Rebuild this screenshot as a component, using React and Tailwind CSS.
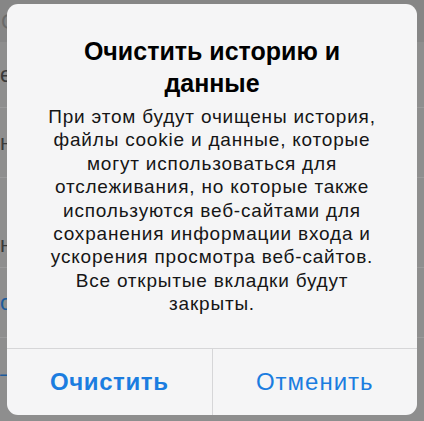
import React from 'react';

function BackgroundPage() {
  // dimmed settings screen behind the alert
  return (
    <div className="flex flex-col h-full w-full bg-[#8e8e8e]">
      <div className="h-[42px] bg-[#868686] flex items-center px-[1px] text-[22px] text-[#6a6a6a]">С</div>
      <div className="h-[66px] border-b border-[#9a9a9a] flex items-center text-[22px] text-[#3a3a3a]">е</div>
      <div className="h-[70px] border-b border-[#9a9a9a] flex items-center text-[22px] text-[#3a3a3a]">н</div>
      <div className="h-[90px] border-b border-[#9a9a9a] flex items-end pb-[6px] text-[22px] text-[#3a3a3a]">н</div>
      <div className="h-[70px] border-b border-[#9a9a9a] flex items-center text-[22px] text-[#1d5c9c]">о</div>
      <div className="h-[70px] flex items-center text-[22px] text-[#1d5c9c]">–</div>
    </div>
  );
}

function Alert() {
  return (
    <div className="absolute left-[7px] top-[4px] w-[410px] h-[411px] rounded-[11px] bg-[#f5f5f6] flex flex-col overflow-hidden">
      <div className="flex-1 flex flex-col items-center pt-[31px] text-center">
        <h2 className="text-[25px] leading-[32px] font-bold text-black whitespace-nowrap">
          Очистить историю и
          <br />
          данные
        </h2>
        <p className="mt-[6px] text-[19px] leading-[23.4px] tracking-[0.8px] text-[#161616] whitespace-nowrap">
          При этом будут очищены история,
          <br />
          файлы cookie и данные, которые
          <br />
          могут использоваться для
          <br />
          отслеживания, но которые также
          <br />
          используются веб-сайтами для
          <br />
          сохранения информации входа и
          <br />
          ускорения просмотра веб-сайтов.
          <br />
          Все открытые вкладки будут
          <br />
          закрыты.
        </p>
      </div>
      <div className="h-[67px] border-t border-[#d6d6d8] flex">
        <button className="flex-1 flex items-center justify-center text-[24px] tracking-[0.6px] font-bold text-[#1b7de0]">
          Очистить
        </button>
        <div className="w-px bg-[#d6d6d8]" />
        <button className="flex-1 flex items-center justify-center text-[24px] tracking-[1px] text-[#1b7de0]">
          Отменить
        </button>
      </div>
    </div>
  );
}

export default function App() {
  return (
    <div
      className="relative w-[424px] h-[421px] overflow-hidden"
      style={{ fontFamily: '"Liberation Sans", Arial, sans-serif' }}
    >
      <BackgroundPage />
      <Alert />
    </div>
  );
}
